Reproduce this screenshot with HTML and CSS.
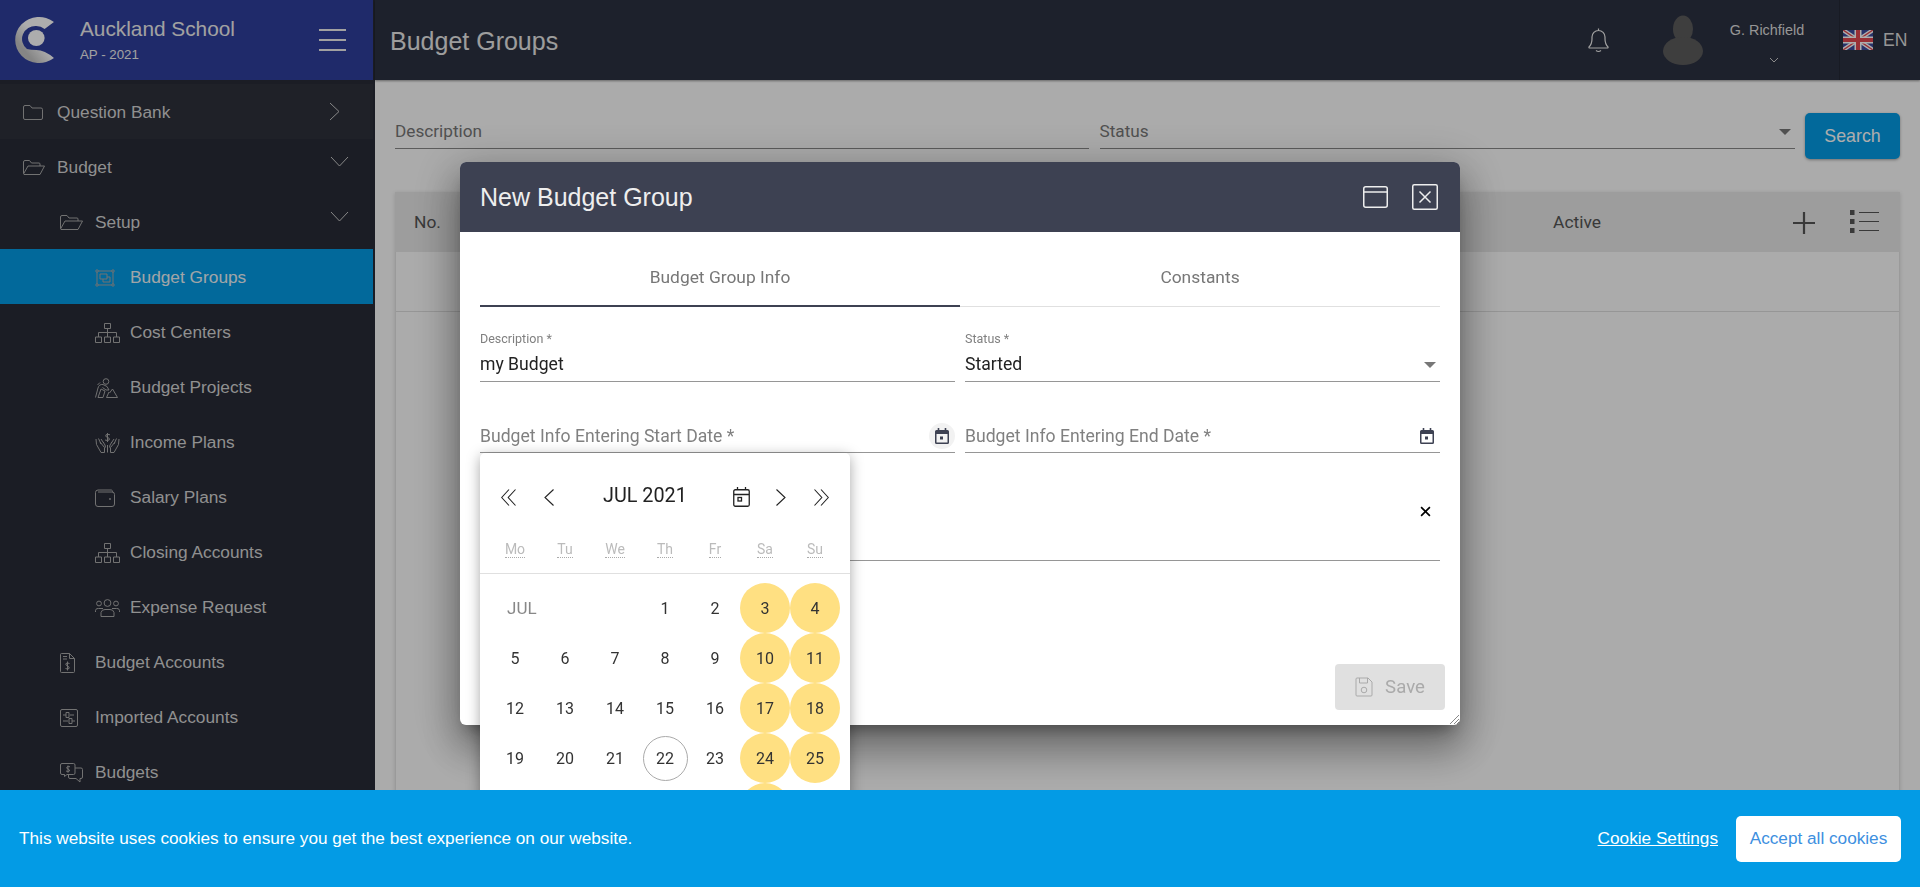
FILE: index.html
```html
<!DOCTYPE html>
<html lang="en">
<head>
    <meta charset="UTF-8">
    <meta name="viewport" content="width=device-width, initial-scale=1.0">
    <title>Budget Groups</title>
    <link rel="stylesheet" href="styles.css">
</head>
<body>

<div class="app">
    <aside class="sidebar">
        <div class="brand">
            <svg class="brand-logo" viewBox="2.5 0 38.5 46" preserveAspectRatio="none">
                <defs>
                    <linearGradient id="logoShade" x1="1" y1="0" x2="0" y2="1">
                        <stop offset="0.45" stop-color="#fff"/>
                        <stop offset="0.75" stop-color="#c4c4c4"/>
                    </linearGradient>
                </defs>
                <path d="M40 5 A23 23 0 1 0 40 41 Q31 33 23 33 Q18 33 14 32 A13 13 0 0 1 23 9 A13 13 0 0 1 31 12 Z" fill="url(#logoShade)"/>
                <circle cx="23" cy="21" r="8" fill="#fff"/>
            </svg>
            <div class="brand-text">
                <div class="brand-name">Auckland School</div>
                <div class="brand-year">AP - 2021</div>
            </div>
            <div class="burger"><span></span><span></span><span></span></div>
        </div>

        <nav class="menu">
            <a class="menu-item lvl-1 is-closed">
                <span class="ico"><svg width="20" height="15" viewBox="0 0 20 15"><path d="M.5 2 a1.5 1.5 0 0 1 1.5-1.5 H7 L9 3 H18 a1.5 1.5 0 0 1 1.5 1.5 V13 a1.5 1.5 0 0 1-1.5 1.5 H2 a1.5 1.5 0 0 1-1.5-1.5 Z"/></svg></span>
                <span>Question Bank</span>
                <svg class="chev chev-right" viewBox="0 0 11 19"><path d="M1 1 L10 9.5 L1 18"/></svg>
            </a>
            <a class="menu-item lvl-1">
                <span class="ico"><svg width="22" height="15" viewBox="0 0 22 15"><path d="M.5 13.5 V2 a1.5 1.5 0 0 1 1.5-1.5 H6.5 L8.5 3 H16 a1 1 0 0 1 1 1 V6 M.5 14 L5 6 H21.5 L17 14.5 H1 Z"/></svg></span>
                <span>Budget</span>
                <svg class="chev chev-down" viewBox="0 0 19 11"><path d="M1 1 L9.5 10 L18 1"/></svg>
            </a>
            <a class="menu-item lvl-2">
                <span class="ico"><svg width="23" height="15" viewBox="0 0 23 15"><path d="M.5 13.5 V2 a1.5 1.5 0 0 1 1.5-1.5 H7 L9 3 H17 a1 1 0 0 1 1 1 V6 M.5 14 L5 6 H22.5 L18 14.5 H1 Z"/></svg></span>
                <span>Setup</span>
                <svg class="chev chev-down" viewBox="0 0 19 11"><path d="M1 1 L9.5 10 L18 1"/></svg>
            </a>
            <a class="menu-item lvl-3 is-active">
                <span class="ico"><svg width="20" height="18" viewBox="0 0 20 18"><path d="M3 2 H17 M3 16 H17 M2 3 V15 M18 3 V15 M5 5 H12 V10 H5 Z M8 10 V13 H15 V8 H12"/><circle cx="2" cy="2" r="1.2"/><circle cx="18" cy="2" r="1.2"/><circle cx="2" cy="16" r="1.2"/><circle cx="18" cy="16" r="1.2"/></svg></span>
                <span>Budget Groups</span>
            </a>
            <a class="menu-item lvl-3">
                <span class="ico"><svg width="25" height="20" viewBox="0 0 25 20"><path d="M9.5 .5 H15.5 V5.5 H9.5 Z M12.5 5.5 V14 M3.5 14 V9.5 H21.5 V14 M.5 14 H6.5 V19.5 H.5 Z M9.5 14 H15.5 V19.5 H9.5 Z M18.5 14 H24.5 V19.5 H18.5 Z"/></svg></span>
                <span>Cost Centers</span>
            </a>
            <a class="menu-item lvl-3">
                <span class="ico"><svg width="23" height="20" viewBox="0 0 23 20"><circle cx="11" cy="3.5" r="2.8"/><path d="M.5 19.5 L3 10 Q4 6 8 6.5 L12 8.5 L14 12 L11 12 L7.5 9.5 M3 19.5 L6 11 L10 13 L8 19.5 Z M11.5 19.5 L14 14 M11.5 19.5 H22.5 L17.5 11 L14.5 15 M2.5 7 L5 4.5"/></svg></span>
                <span>Budget Projects</span>
            </a>
            <a class="menu-item lvl-3">
                <span class="ico"><svg width="25" height="20" viewBox="0 0 25 20"><path d="M1 6 L1.5 11.5 L6 19.5 H9.5 V14.5 L5 9 M3.5 5.5 L6 11 M6 6 L10 12 L10.5 14.5 M24 6 L23.5 11.5 L19 19.5 H15.5 V14.5 L20 9 M21.5 5.5 L19 11 M19 6 L15 12 L14.5 14.5 M12.5 12 V19.5 M8 9 L9 10 M17 9 L16 10 M15 1.8 Q12.5 .8 11 1.8 Q9.8 3.6 12.5 4.4 Q15.2 5.2 14.2 7 Q12.5 8 10 7 M12.5 0 V9"/></svg></span>
                <span>Income Plans</span>
            </a>
            <a class="menu-item lvl-3">
                <span class="ico"><svg width="20" height="18" viewBox="0 0 20 18"><path d="M3 1 H16 a1.5 1.5 0 0 1 1.5 2 M.5 3.5 a2.5 2.5 0 0 1 2.5-2.5 M.5 3.5 V15 a2.5 2.5 0 0 0 2.5 2.5 H17 a2.5 2.5 0 0 0 2.5-2.5 V5.5 a2.5 2.5 0 0 0-2.5-2.5 H3"/><circle cx="15" cy="10" r=".6"/></svg></span>
                <span>Salary Plans</span>
            </a>
            <a class="menu-item lvl-3">
                <span class="ico"><svg width="25" height="20" viewBox="0 0 25 20"><path d="M9.5 .5 H15.5 V5.5 H9.5 Z M12.5 5.5 V14 M3.5 14 V9.5 H21.5 V14 M.5 14 H6.5 V19.5 H.5 Z M9.5 14 H15.5 V19.5 H9.5 Z M18.5 14 H24.5 V19.5 H18.5 Z"/></svg></span>
                <span>Closing Accounts</span>
            </a>
            <a class="menu-item lvl-3">
                <span class="ico"><svg width="25" height="18" viewBox="0 0 25 18"><circle cx="12.5" cy="4" r="3.4"/><circle cx="4" cy="4.5" r="2.4"/><circle cx="21" cy="4.5" r="2.4"/><path d="M6 17.5 V13.5 a4 4 0 0 1 4-3 H15 a4 4 0 0 1 4 3 V17.5 Z M.5 13 V11.5 a2.5 2.5 0 0 1 3-2 H8 M24.5 13 V11.5 a2.5 2.5 0 0 0-3-2 H17"/></svg></span>
                <span>Expense Request</span>
            </a>
            <a class="menu-item lvl-2">
                <span class="ico"><svg width="15" height="20" viewBox="0 0 15 20"><path d="M.5 1.5 a1 1 0 0 1 1-1 H9.5 L14.5 5.5 V18.5 a1 1 0 0 1-1 1 H1.5 a1 1 0 0 1-1-1 Z M9.5 .5 V5.5 H14.5 M3 3.5 H7 M3 6 H7 M9.5 10.5 Q7.5 9.5 6 10.5 Q5 12 7.5 13 Q10 14 9 15.5 Q7.5 16.5 5.5 15.5 M7.5 8.5 V17.5"/></svg></span>
                <span>Budget Accounts</span>
            </a>
            <a class="menu-item lvl-2">
                <span class="ico"><svg width="18" height="18" viewBox="0 0 18 18"><rect x=".5" y=".5" width="17" height="17" rx="1.5"/><path d="M3 6 H6 M10 6 H14 M3 12 H8 M12 12 H15 M6 3.5 H9 V8.5 H6 Z M9 9.5 H12 V14.5 H9 Z"/></svg></span>
                <span>Imported Accounts</span>
            </a>
            <a class="menu-item lvl-2">
                <span class="ico"><svg width="23" height="20" viewBox="0 0 23 20"><path d="M2 .5 H13.5 a1.5 1.5 0 0 1 1.5 1.5 V10 a1.5 1.5 0 0 1-1.5 1.5 H7 L4.5 13.5 V11.5 H2 A1.5 1.5 0 0 1 .5 10 V2 A1.5 1.5 0 0 1 2 .5 Z M15 5 H21 a1.5 1.5 0 0 1 1.5 1.5 V14 a1.5 1.5 0 0 1-1.5 1.5 H20 V19 L16 15.5 H10 a1.5 1.5 0 0 1-1.5-1.5 V11.5 M10 3.8 Q8 3 7 4 Q6 5.5 8 6 Q10 6.8 9.5 8 Q8 9 6 8 M8 2.5 V9.8"/></svg></span>
                <span>Budgets</span>
            </a>
        </nav>
    </aside>

    <div class="content">
        <header class="topbar">
            <h1 class="page-title">Budget Groups</h1>
            <div class="topbar-right">
                <svg class="bell" viewBox="0 0 23 26"><path d="M2 20 Q5 17 5 12 V10 a6.5 6.5 0 0 1 13 0 V12 Q18 17 21 20 a.8.8 0 0 1-.5 1 H2.5 a.8.8 0 0 1-.5-1 Z M11.5 3.5 V1.5 M9 23.5 Q11.5 25.5 14 23.5"/></svg>
                <svg class="avatar" viewBox="0 0 40 50"><ellipse cx="20" cy="14" rx="10" ry="13.5"/><ellipse cx="20" cy="36" rx="20" ry="14"/></svg>
                <div class="user">
                    <div class="user-name">G. Richfield</div>
                    <svg class="user-chev" viewBox="0 0 10 6"><path d="M1 1 L5 5 L9 1"/></svg>
                </div>
                <div class="lang">
                    <svg class="flag" viewBox="0 0 30 20">
                        <rect width="30" height="20" fill="#3b4a9c"/>
                        <path d="M0 0 L30 20 M30 0 L0 20" stroke="#fff" stroke-width="4"/>
                        <path d="M0 0 L30 20 M30 0 L0 20" stroke="#e2464f" stroke-width="1.4"/>
                        <path d="M15 0 V20 M0 10 H30" stroke="#fff" stroke-width="7"/>
                        <path d="M15 0 V20 M0 10 H30" stroke="#e2464f" stroke-width="4"/>
                    </svg>
                    <span>EN</span>
                </div>
            </div>
        </header>

        <main class="page">
            <div class="filters">
                <div class="filter-field">Description</div>
                <div class="filter-field">Status<i class="caret"></i></div>
                <button class="search-btn">Search</button>
            </div>

            <section class="table-card">
                <div class="table-head">
                    <span class="col-no">No.</span>
                    <span class="col-active">Active</span>
                    <svg class="head-plus" viewBox="0 0 22 22"><path d="M11 0 V22 M0 11 H22"/></svg>
                    <svg class="head-list" viewBox="0 0 29 23"><path d="M9 2.5 H29 M9 11.5 H29 M9 20.5 H29"/><rect x="0" y=".5" width="4" height="4"/><rect x="0" y="9.5" width="4" height="4"/><rect x="0" y="18.5" width="4" height="4"/></svg>
                </div>
                <div class="table-row"></div>
            </section>
        </main>
    </div>
</div>

<div class="backdrop"></div>

<div class="modal">
    <div class="modal-head">
        <h2 class="modal-title">New Budget Group</h2>
        <svg class="modal-btn" viewBox="0 0 25 22"><rect x=".75" y=".75" width="23.5" height="20.5" rx="2"/><path d="M1 6 H24"/></svg>
        <svg class="modal-btn modal-close" viewBox="0 0 26 26"><rect x=".75" y=".75" width="24.5" height="24.5" rx="1.5"/><path d="M7.5 7.5 L18.5 18.5 M18.5 7.5 L7.5 18.5"/></svg>
    </div>

    <div class="modal-body">
        <div class="tabs">
            <div class="tab is-current">Budget Group Info</div>
            <div class="tab">Constants</div>
        </div>

        <div class="form-grid">
            <div class="field">
                <label class="field-label">Description *</label>
                <div class="field-value">my Budget</div>
            </div>
            <div class="field">
                <label class="field-label">Status *</label>
                <div class="field-value">Started<i class="caret"></i></div>
            </div>
            <div class="field field-date">
                <span class="field-hint">Budget Info Entering Start Date *</span>
                <span class="cal-btn is-open">
                    <svg class="cal-ico" viewBox="0 0 14 16"><path d="M3.5 0 V3 M10.5 0 V3" stroke="#3d4152" stroke-width="1.6"/><path fill-rule="evenodd" d="M1.5 2 H12.5 A1.5 1.5 0 0 1 14 3.5 V14.5 A1.5 1.5 0 0 1 12.5 16 H1.5 A1.5 1.5 0 0 1 0 14.5 V3.5 A1.5 1.5 0 0 1 1.5 2 Z M1.5 6 V14.5 H12.5 V6 Z M5 8.5 H8 V11.5 H5 Z"/></svg>
                </span>
            </div>
            <div class="field field-date">
                <span class="field-hint">Budget Info Entering End Date *</span>
                <span class="cal-btn">
                    <svg class="cal-ico" viewBox="0 0 14 16"><path d="M3.5 0 V3 M10.5 0 V3" stroke="#3d4152" stroke-width="1.6"/><path fill-rule="evenodd" d="M1.5 2 H12.5 A1.5 1.5 0 0 1 14 3.5 V14.5 A1.5 1.5 0 0 1 12.5 16 H1.5 A1.5 1.5 0 0 1 0 14.5 V3.5 A1.5 1.5 0 0 1 1.5 2 Z M1.5 6 V14.5 H12.5 V6 Z M5 8.5 H8 V11.5 H5 Z"/></svg>
                </span>
            </div>
            <div class="field field-wide">
                <svg class="clear-ico" viewBox="0 0 10 10"><path d="M1 1 L9 9 M9 1 L1 9"/></svg>
            </div>
        </div>

        <div class="modal-foot">
            <button class="save-btn" disabled>
                <svg viewBox="0 0 18 20"><path d="M1 2 a1 1 0 0 1 1-1 H13 L17 5 V18 a1 1 0 0 1-1 1 H2 a1 1 0 0 1-1-1 Z M4.5 1 V6 H12.5 V1"/><circle cx="9" cy="13" r="2.8"/></svg>
                Save
            </button>
        </div>
    </div>
    <svg class="resize-grip" viewBox="0 0 10 10"><path d="M1 10 L10 1 M5 10 L10 5 M8 10 L10 8"/></svg>

    <div class="datepicker">
        <div class="dp-nav">
            <svg class="dp-arrow dp-first" viewBox="0 0 15 17"><path d="M8 .5 L.7 8.5 L8 16.5 M14.5 .5 L7.2 8.5 L14.5 16.5"/></svg>
            <svg class="dp-arrow dp-prev" viewBox="0 0 10 17"><path d="M9.5 .5 L1 8.5 L9.5 16.5"/></svg>
            <span class="dp-month">JUL 2021</span>
            <svg class="dp-cal" viewBox="0 0 17 20"><rect x=".75" y="2.75" width="15.5" height="16.5" rx="1.5"/><path d="M1 7.5 H16 M4.5 0 V3 M12.5 0 V3"/><rect x="5" y="10.5" width="3.5" height="3.5"/></svg>
            <svg class="dp-arrow dp-next" viewBox="0 0 10 17"><path d="M.5 .5 L9 8.5 L.5 16.5"/></svg>
            <svg class="dp-arrow dp-last" viewBox="0 0 15 17"><path d="M.5 .5 L7.8 8.5 L.5 16.5 M7 .5 L14.3 8.5 L7 16.5"/></svg>
        </div>
        <div class="dp-week">
            <abbr>Mo</abbr><abbr>Tu</abbr><abbr>We</abbr><abbr>Th</abbr><abbr>Fr</abbr><abbr>Sa</abbr><abbr>Su</abbr>
        </div>
        <div class="dp-days">
            <span class="dp-label">JUL</span>
            <span>1</span><span>2</span><span class="wkend">3</span><span class="wkend">4</span>
            <span>5</span><span>6</span><span>7</span><span>8</span><span>9</span><span class="wkend">10</span><span class="wkend">11</span>
            <span>12</span><span>13</span><span>14</span><span>15</span><span>16</span><span class="wkend">17</span><span class="wkend">18</span>
            <span>19</span><span>20</span><span>21</span><span class="today">22</span><span>23</span><span class="wkend">24</span><span class="wkend">25</span>
            <span>26</span><span>27</span><span>28</span><span>29</span><span>30</span><span class="wkend">31</span><span></span>
        </div>
    </div>
</div>

<div class="cookie-bar">
    <p class="cookie-text">This website uses cookies to ensure you get the best experience on our website.</p>
    <a class="cookie-link">Cookie Settings</a>
    <button class="cookie-btn">Accept all cookies</button>
</div>

</body>
</html>
```

FILE: styles.css
```css
* {
    box-sizing: border-box;
}

html, body {
    height: 100%;
}

body {
    margin: 0;
    overflow: hidden;
    font-family: "Liberation Sans", Arial, sans-serif;
    background: #fcfcfc;
    color: #222;
}

.app {
    display: flex;
    height: 100vh;
}

/* sidebar */
.sidebar {
    width: 375px;
    flex: none;
    background: #282b37;
    padding-right: 2px;
}

.brand {
    height: 80px;
    margin-right: -2px;
    padding-right: 27px;
    background: #2e3e9d;
    border-right: 2px solid #282b37;
    display: flex;
    align-items: center;
    color: #eee;
}

.brand-logo {
    width: 40px;
    height: 46px;
    margin-left: 15px;
}

.brand-text {
    margin-left: 25px;
    flex: 1;
}

.brand-name {
    font-size: 20.8px;
    line-height: 28px;
}

.brand-year {
    font-size: 13.3px;
    line-height: 20px;
    margin-top: 2px;
}

.burger {
    width: 27px;
    display: flex;
    flex-direction: column;
    gap: 8px;
}

.burger span {
    height: 2px;
    background: #eee;
}

.menu {
    padding-top: 4px;
}

.menu-item {
    height: 55px;
    padding-top: 2px;
    display: flex;
    align-items: center;
    font-size: 17.3px;
    color: #d4d4d4;
}

.menu-item.is-closed {
    background: #2e313c;
}

.menu-item.is-active {
    background: #039be5;
    color: #eef4f7;
}

.lvl-1 { padding-left: 23px; }
.lvl-2 { padding-left: 60px; }
.lvl-3 { padding-left: 95px; }

.ico {
    width: 35px;
    flex: none;
    display: flex;
    align-items: center;
}

.lvl-1 .ico {
    width: 34px;
}

.ico svg {
    fill: none;
    stroke: #a8a8a8;
    stroke-width: 1;
}

.chev {
    margin-left: auto;
    fill: none;
    stroke: #c8c8c8;
    stroke-width: 1;
}

.chev-right {
    width: 11px;
    height: 19px;
    margin-right: 33px;
    margin-bottom: 2px;
}

.chev-down {
    width: 19px;
    height: 11px;
    margin-right: 24px;
    margin-bottom: 12px;
}

/* top bar */
.content {
    flex: 1;
    display: flex;
    flex-direction: column;
    min-width: 0;
}

.topbar {
    height: 80px;
    flex: none;
    background: #2c3141;
    box-shadow: 0 1px 2px rgba(0, 0, 0, 0.4);
    padding-left: 15px;
    display: flex;
    align-items: center;
}

.page-title {
    margin: 2px 0 0;
    font-size: 25px;
    font-weight: 400;
    color: #e8e8e8;
}

.topbar-right {
    margin-left: auto;
    display: flex;
    align-items: center;
    height: 100%;
    color: #ddd;
}

.bell {
    width: 23px;
    height: 26px;
    fill: none;
    stroke: #eee;
    stroke-width: 1.2;
}

.avatar {
    width: 40px;
    height: 50px;
    margin-left: 53px;
    fill: #5c5c5c;
}

.user {
    width: 106px;
    margin-left: 11px;
    margin-right: 19px;
    height: 100%;
    font-size: 14.4px;
    text-align: center;
    padding-top: 21px;
}

.user-name {
    line-height: 18px;
}

.user-chev {
    display: block;
    width: 10px;
    height: 6px;
    margin: 18px 0 0 55px;
    fill: none;
    stroke: #ccc;
    stroke-width: 1;
}

.lang {
    height: 100%;
    border-left: 1px solid #242835;
    padding-left: 3px;
    width: 81px;
    display: flex;
    align-items: center;
    font-size: 17.6px;
}

.flag {
    width: 30px;
    height: 20px;
    margin-right: 10px;
}

/* page behind the dialog */
.page {
    flex: 1;
    padding: 33px 20px 0;
    display: flex;
    flex-direction: column;
    min-height: 0;
}

.filters {
    display: grid;
    grid-template-columns: 694px 695px 95px;
    column-gap: 10.5px;
}

.filter-field {
    position: relative;
    height: 36px;
    border-bottom: 1px solid #888;
    font-family: Roboto, sans-serif;
    font-size: 17.2px;
    line-height: 36px;
    color: #777;
}

.caret {
    position: absolute;
    right: 4px;
    top: 50%;
    border-left: 6px solid transparent;
    border-right: 6px solid transparent;
    border-top: 6px solid #777;
    margin-top: -2px;
}

.search-btn {
    height: 46px;
    border: 0;
    border-radius: 5px;
    background: #039be5;
    color: #fff;
    font-family: inherit;
    font-size: 17.8px;
    box-shadow: 0 1px 3px rgba(0, 0, 0, 0.35);
}

.table-card {
    flex: 1;
    margin-top: 33px;
    background: #fcfcfc;
    border: 1px solid #e4e4e4;
    border-top: 0;
    box-shadow: 0 1px 4px rgba(0, 0, 0, 0.15);
}

.table-head {
    height: 60px;
    margin: 0 -1px;
    background: #e7e7e7;
    display: flex;
    align-items: center;
    font-family: Roboto, sans-serif;
    font-size: 17.4px;
    color: #555;
}

.col-no {
    margin-left: 19px;
}

.col-active {
    margin-left: auto;
}

.head-plus {
    width: 22px;
    height: 22px;
    margin-left: 192px;
    margin-top: 2px;
    fill: none;
    stroke: #555;
    stroke-width: 2.2;
}

.head-list {
    width: 29px;
    height: 23px;
    margin-left: 35px;
    margin-right: 21px;
    margin-bottom: 2px;
    stroke: #555;
    stroke-width: 1;
    fill: #555;
}

.table-row {
    height: 60px;
    border-bottom: 1px solid #ddd;
}

/* dialog */
.backdrop {
    position: fixed;
    inset: 0;
    background: rgba(0, 0, 0, 0.32);
}

.modal {
    position: fixed;
    left: 460px;
    top: 162px;
    width: 1000px;
    height: 563px;
    display: flex;
    flex-direction: column;
    background: #fff;
    border-radius: 6px;
    font-family: Roboto, sans-serif;
    box-shadow: 0 11px 15px -7px rgba(0, 0, 0, 0.35), 0 24px 38px 3px rgba(0, 0, 0, 0.25), 0 9px 46px 8px rgba(0, 0, 0, 0.2);
}

.modal-head {
    height: 70px;
    flex: none;
    padding: 0 22px 0 20px;
    background: #3d4152;
    border-radius: 6px 6px 0 0;
    display: flex;
    align-items: center;
}

.modal-title {
    flex: 1;
    margin: 0;
    font-size: 25px;
    font-weight: 400;
    font-family: "Liberation Sans", Arial, sans-serif;
    color: #eee;
}

.modal-btn {
    width: 25px;
    height: 22px;
    fill: none;
    stroke: #eee;
    stroke-width: 1.5;
}

.modal-close {
    width: 26px;
    height: 26px;
    margin-left: 24px;
}

.modal-body {
    flex: 1;
    padding: 0 20px;
    display: flex;
    flex-direction: column;
}

.tabs {
    display: flex;
    height: 75px;
    border-bottom: 1px solid #e0e0e0;
}

.tab {
    flex: 1;
    text-align: center;
    font-size: 17.4px;
    line-height: 90px;
    color: #777;
}

.tab.is-current {
    height: 75px;
    border-bottom: 2px solid #3d4152;
}

.form-grid {
    display: grid;
    grid-template-columns: 475px 475px;
    column-gap: 10px;
}

.field {
    position: relative;
    border-bottom: 1px solid #969696;
    color: #222;
}

.field:nth-child(-n+2) {
    margin-top: 24px;
    height: 51px;
}

.field-label {
    display: block;
    font-size: 12.5px;
    line-height: 16px;
    color: #808080;
}

.field-value {
    position: relative;
    font-size: 17.6px;
    line-height: 34px;
}

.field-date {
    margin-top: 35px;
    height: 36px;
    padding-top: 2px;
    display: flex;
    align-items: center;
    justify-content: space-between;
}

.field-hint {
    font-size: 17.6px;
    color: #808080;
}

.cal-btn {
    width: 26px;
    height: 26px;
    border-radius: 50%;
    display: flex;
    align-items: center;
    justify-content: center;
}

.cal-btn.is-open {
    background: #f2f2f2;
}

.cal-ico {
    width: 14px;
    height: 16px;
    fill: #3d4152;
}

.field-wide {
    grid-column: 1 / 3;
    height: 108px;
    display: flex;
    align-items: center;
    justify-content: flex-end;
    padding-right: 9px;
    padding-top: 10px;
}

.clear-ico {
    width: 11px;
    height: 11px;
    fill: none;
    stroke: #000;
    stroke-width: 1.5;
}

.modal-foot {
    margin-top: auto;
    padding-bottom: 15px;
    display: flex;
    justify-content: flex-end;
    margin-right: -5px;
}

.save-btn {
    width: 110px;
    height: 46px;
    border: 0;
    border-radius: 4px;
    background: #e0e0e0;
    color: #aaa;
    font-family: inherit;
    font-size: 18.6px;
    display: flex;
    align-items: center;
    justify-content: center;
    gap: 12px;
}

.save-btn svg {
    width: 18px;
    height: 20px;
    fill: none;
    stroke: #aaa;
    stroke-width: 1;
}

.resize-grip {
    position: absolute;
    right: 1px;
    bottom: 1px;
    width: 10px;
    height: 10px;
    fill: none;
    stroke: #555;
    stroke-width: 0.7;
}

/* date picker */
.datepicker {
    position: absolute;
    left: 20px;
    top: 291px;
    width: 370px;
    background: #fff;
    border-radius: 5px;
    box-shadow: 0 3px 14px rgba(0, 0, 0, 0.35);
}

.dp-nav {
    height: 88px;
    display: flex;
    align-items: center;
    padding-left: 21px;
}

.dp-arrow {
    fill: none;
    stroke: #222;
    stroke-width: 1.1;
}

.dp-first, .dp-last {
    width: 15px;
    height: 17px;
}

.dp-prev, .dp-next {
    width: 10px;
    height: 17px;
}

.dp-prev {
    margin-left: 28px;
}

.dp-month {
    width: 130px;
    margin-left: 49px;
    margin-bottom: 4px;
    font-size: 19.8px;
    color: #222;
}

.dp-cal {
    width: 17px;
    height: 20px;
    fill: none;
    stroke: #222;
    stroke-width: 1.3;
}

.dp-next {
    margin-left: 26px;
}

.dp-last {
    margin-left: 28px;
}

.dp-week {
    display: grid;
    grid-template-columns: repeat(7, 50px);
    height: 32px;
    padding-left: 10px;
    box-sizing: content-box;
    border-bottom: 1px solid #e0e0e0;
    text-align: center;
    align-items: start;
}

.dp-week abbr {
    justify-self: center;
    font-size: 14px;
    line-height: 16px;
    color: #bbb;
    border-bottom: 1px dotted #aaa;
}

.dp-days {
    display: grid;
    grid-template-columns: repeat(7, 50px);
    grid-auto-rows: 50px;
    padding: 9px 0 0 10px;
    font-size: 16px;
    color: #333;
}

.dp-days span {
    display: flex;
    align-items: center;
    justify-content: center;
    border-radius: 50%;
}

.dp-days .dp-label {
    grid-column: 1 / 4;
    justify-content: flex-start;
    padding-left: 17px;
    font-size: 17px;
    color: #888;
}

.dp-days .wkend {
    background: #ffe082;
}

.dp-days .today {
    width: 45px;
    height: 45px;
    margin: 2.5px;
    border: 1px solid #aaa;
}

/* cookies */
.cookie-bar {
    position: fixed;
    left: 0;
    right: 0;
    bottom: 0;
    height: 97px;
    padding: 0 19px;
    background: #039be5;
    color: #fff;
    display: flex;
    align-items: center;
    font-size: 17.2px;
}

.cookie-text {
    flex: 1;
    margin: 0;
}

.cookie-link {
    text-decoration: underline;
    margin-right: 18px;
}

.cookie-btn {
    width: 165px;
    height: 46px;
    border: 0;
    border-radius: 5px;
    background: #fff;
    color: #3d8fe0;
    font-family: inherit;
    font-size: 17.2px;
}
```
